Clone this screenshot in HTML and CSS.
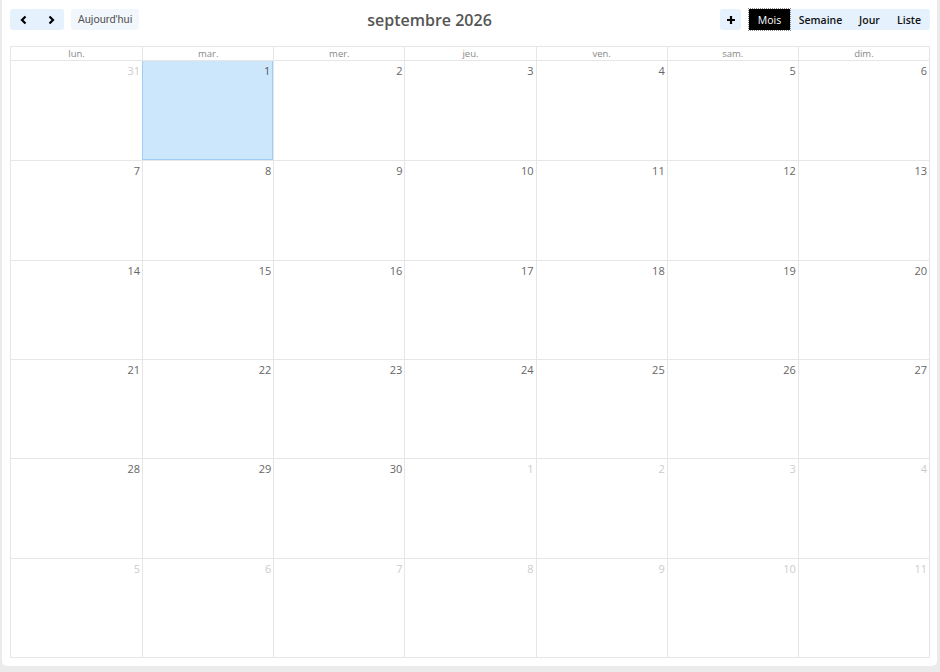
FILE: index.html
```html
<!DOCTYPE html>
<html lang="fr">
<head>
<meta charset="utf-8">
<title>Calendrier</title>
<link rel="stylesheet" href="styles.css">
</head>
<body>
<div class="card">
  <div class="toolbar">
    <div class="left">
      <div class="btn-group">
        <button class="btn icon" aria-label="précédent"><svg width="10" height="10" viewBox="0 0 10 10"><path d="M6.5 1.5 L3 5 L6.5 8.5" fill="none" stroke="#000" stroke-width="2.2"/></svg></button>
        <button class="btn icon" aria-label="suivant"><svg width="10" height="10" viewBox="0 0 10 10"><path d="M3.5 1.5 L7 5 L3.5 8.5" fill="none" stroke="#000" stroke-width="2.2"/></svg></button>
      </div>
      <button class="btn today">Aujourd'hui</button>
    </div>
    <h2 class="title">septembre 2026</h2>
    <div class="right">
      <button class="btn plus" aria-label="ajouter"><svg width="10" height="10" viewBox="0 0 10 10"><path d="M5 1 V9 M1 5 H9" stroke="#000" stroke-width="2.2"/></svg></button>
      <div class="btn-group views">
        <button class="btn view active">Mois</button>
        <button class="btn view">Semaine</button>
        <button class="btn view">Jour</button>
        <button class="btn view">Liste</button>
      </div>
    </div>
  </div>
  <div class="cal">
    <div class="head">
      <div>lun.</div><div>mar.</div><div>mer.</div><div>jeu.</div><div>ven.</div><div>sam.</div><div>dim.</div>
    </div>
    <div class="grid">
      <div class="day other">31</div><div class="day today-cell">1</div><div class="day">2</div><div class="day">3</div><div class="day">4</div><div class="day">5</div><div class="day">6</div>
      <div class="day">7</div><div class="day">8</div><div class="day">9</div><div class="day">10</div><div class="day">11</div><div class="day">12</div><div class="day">13</div>
      <div class="day">14</div><div class="day">15</div><div class="day">16</div><div class="day">17</div><div class="day">18</div><div class="day">19</div><div class="day">20</div>
      <div class="day">21</div><div class="day">22</div><div class="day">23</div><div class="day">24</div><div class="day">25</div><div class="day">26</div><div class="day">27</div>
      <div class="day">28</div><div class="day">29</div><div class="day">30</div><div class="day other">1</div><div class="day other">2</div><div class="day other">3</div><div class="day other">4</div>
      <div class="day other">5</div><div class="day other">6</div><div class="day other">7</div><div class="day other">8</div><div class="day other">9</div><div class="day other">10</div><div class="day other">11</div>
    </div>
  </div>
</div>
</body>
</html>
```

FILE: styles.css
```css
html, body {
  margin: 0;
  padding: 0;
  background: #ebebeb;
  font-family: "Open Sans", "Noto Sans", sans-serif;
  color: #555;
}
.card {
  box-sizing: border-box;
  margin-left: 2px;
  width: 935px;
  height: 666px;
  background: #fff;
  border-radius: 0 0 5px 5px;
  padding: 9px 7px 8px 8px;
  display: flex;
  flex-direction: column;
}
.toolbar {
  display: flex;
  justify-content: space-between;
  align-items: flex-start;
  height: 37px;
}
.left, .right {
  display: flex;
  align-items: center;
}
.left { gap: 7px; }
.right { gap: 8px; }
.btn-group {
  display: flex;
  background: #e5f1fc;
  border-radius: 3px;
}
.btn {
  font-family: "Open Sans", "Noto Sans", sans-serif;
  border: 0;
  margin: 0;
  height: 21px;
  background: #e5f1fc;
  color: #222;
  font-size: 10.5px;
  border-radius: 3px;
  padding: 0 8px;
  display: flex;
  align-items: center;
  justify-content: center;
}
.btn.icon {
  width: 27px;
  padding: 0;
  background: transparent;
}
.btn.today {
  width: 68px;
  padding: 0;
  background: #f1f7fd;
  color: #555;
  font-family: "Roboto", "Open Sans", sans-serif;
  font-size: 11px;
}
.btn.plus {
  width: 21px;
  padding: 0;
}
.views .view {
  background: transparent;
  font-weight: 600;
  color: #111;
  border-radius: 0;
  padding: 0;
}
.views .view:nth-child(1) { width: 41px; }
.views .view:nth-child(2) { width: 61px; }
.views .view:nth-child(3) { width: 37px; }
.views .view:nth-child(4) { width: 42px; border-radius: 0 3px 3px 0; }
.views .view.active {
  background: #000;
  color: #fff;
  font-weight: 400;
  outline: 1px dotted #888;
}
.title {
  margin: 0;
  font-size: 16px;
  font-weight: 600;
  color: #555;
  line-height: 22px;
}
.cal {
  flex: 1;
  display: flex;
  flex-direction: column;
  border: 1px solid #e6e6e6;
}
.head {
  display: grid;
  grid-template-columns: repeat(7, 1fr);
  height: 13px;
  border-bottom: 1px solid #e6e6e6;
}
.head div {
  font-size: 9.5px;
  line-height: 13px;
  text-align: center;
  color: #888;
  border-left: 1px solid #e6e6e6;
}
.head div:first-child { border-left: 0; }
.grid {
  flex: 1;
  display: grid;
  grid-template-columns: repeat(7, 1fr);
  grid-template-rows: repeat(6, 1fr);
}
.day {
  box-sizing: border-box;
  border-left: 1px solid #e6e6e6;
  border-top: 1px solid #e6e6e6;
  text-align: right;
  padding: 2px 2px 0 0;
  font-size: 11px;
  line-height: 16px;
  color: #666;
}
.day:nth-child(7n+1) { border-left: 0; }
.day:nth-child(-n+7) { border-top: 0; }
.day.other { color: #ccc; }
.day.today-cell {
  background: #cce6fc;
  border: 1px solid #9fcdf5;
  border-top: 0;
  color: #555;
}
```
